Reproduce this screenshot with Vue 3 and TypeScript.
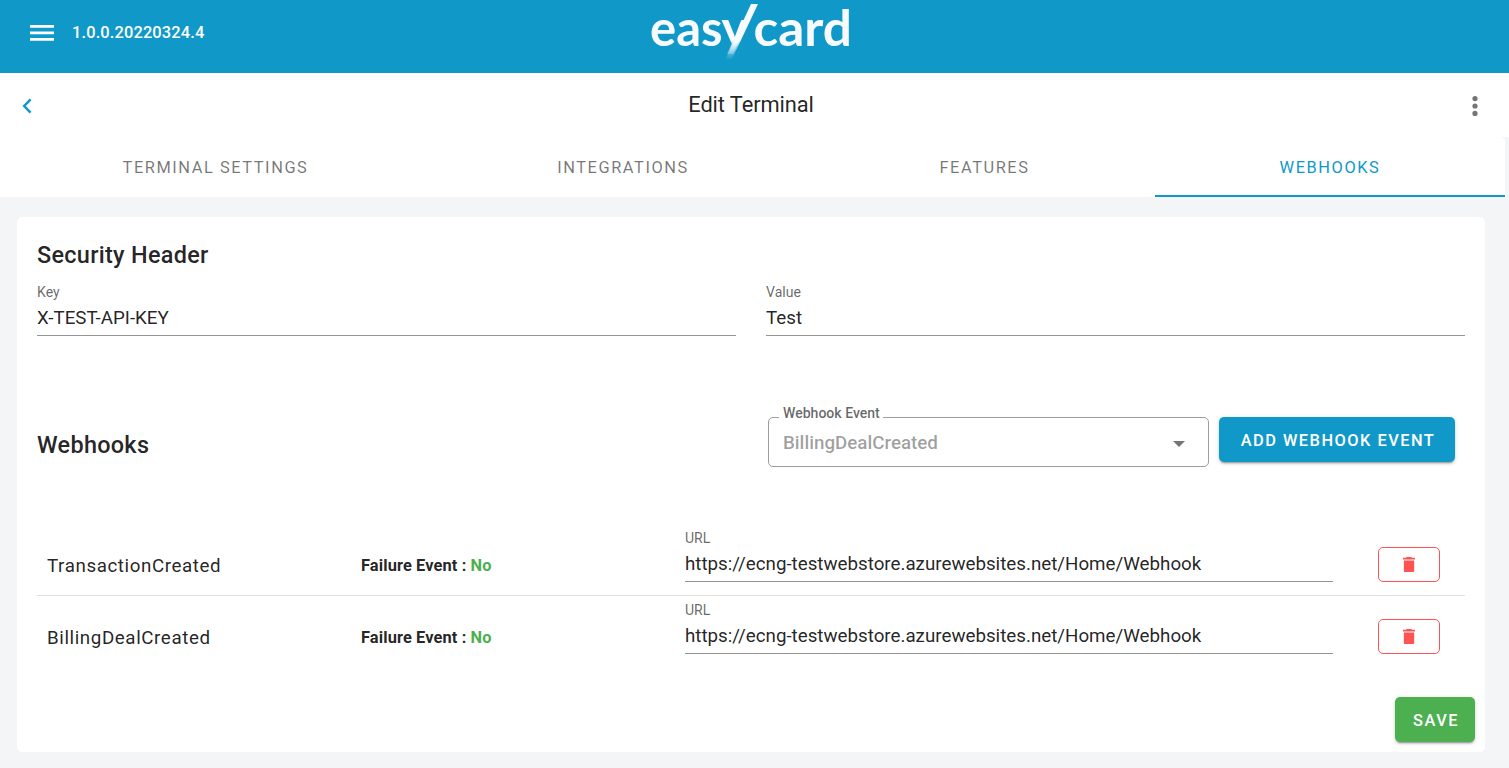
<script setup lang="ts">
import { ref } from 'vue'

interface Webhook {
  name: string
  failure: string
  url: string
}

const version = '1.0.0.20220324.4'
const tabs = ['Terminal settings', 'Integrations', 'Features', 'Webhooks']
const activeTab = ref(3)
const securityHeader = ref([
  { label: 'Key', value: 'X-TEST-API-KEY' },
  { label: 'Value', value: 'Test' },
])
const endpoint = 'https://ecng-testwebstore.azurewebsites.net/Home/Webhook'
const webhooks = ref<Webhook[]>([
  { name: 'TransactionCreated', failure: 'No', url: endpoint },
  { name: 'BillingDealCreated', failure: 'No', url: endpoint },
])
const removeWebhook = (index: number) => webhooks.value.splice(index, 1)
</script>

<template>
  <div class="page">
    <header class="app-bar">
      <div class="bar-side">
        <svg class="menu" viewBox="0 0 24 16" width="24" height="16">
          <path d="M0 0h24v2.7H0zM0 6.5h24v2.7H0zM0 13h24v2.7H0z" fill="#fff" />
        </svg>
        <span class="version">{{ version }}</span>
      </div>
      <svg class="logo" viewBox="0 0 202 62" width="202" height="62">
        <defs>
          <linearGradient id="fade" gradientUnits="userSpaceOnUse" x1="0" y1="40" x2="0" y2="60">
            <stop offset="0" stop-color="#f7fbff" />
            <stop offset="0.35" stop-color="#f7fbff" stop-opacity="0.55" />
            <stop offset="1" stop-color="#f7fbff" stop-opacity="0" />
          </linearGradient>
        </defs>
        <text x="0" y="46" textLength="72.5" lengthAdjust="spacingAndGlyphs">eas</text>
        <text x="71.5" y="46" fill="url(#fade)">y</text>
        <path d="M101 4h7L82 59h-6.5z" fill="url(#fade)" />
        <text class="wide" x="103.5" y="46" textLength="98.5" lengthAdjust="spacingAndGlyphs">card</text>
      </svg>
      <div class="bar-side"></div>
    </header>

    <div class="title-bar">
      <svg class="back" viewBox="0 0 10 16" width="10" height="16">
        <path d="M8.6 1.4 2.2 8l6.4 6.6" fill="none" stroke="#1099c8" stroke-width="2.5" />
      </svg>
      <h1>Edit Terminal</h1>
      <svg class="more" viewBox="0 0 6 20" width="6" height="20">
        <circle cx="3" cy="2.6" r="2.6" /><circle cx="3" cy="10" r="2.6" /><circle cx="3" cy="17.4" r="2.6" />
      </svg>
    </div>

    <nav class="tabs">
      <button
        v-for="(tab, i) in tabs"
        :key="tab"
        class="tab"
        :class="{ active: i === activeTab }"
        @click="activeTab = i"
      >{{ tab }}</button>
    </nav>

    <main class="card">
      <h2>Security Header</h2>
      <div class="header-fields">
        <div v-for="f in securityHeader" :key="f.label" class="field">
          <label>{{ f.label }}</label>
          <div class="value">{{ f.value }}</div>
        </div>
      </div>

      <section class="toolbar">
        <h2>Webhooks</h2>
        <div class="select">
          <span class="legend">Webhook Event</span>
          <span>BillingDealCreated</span>
          <svg viewBox="0 0 12 6" width="12" height="6"><path d="M0 0h12L6 6z" fill="#757575" /></svg>
        </div>
        <button class="btn primary">Add webhook event</button>
      </section>

      <section>
        <div v-for="(hook, i) in webhooks" :key="hook.name" class="row">
          <div class="name">{{ hook.name }}</div>
          <div class="failure">Failure Event : <span>{{ hook.failure }}</span></div>
          <div class="field">
            <label>URL</label>
            <div class="value">{{ hook.url }}</div>
          </div>
          <button class="delete" @click="removeWebhook(i)">
            <svg viewBox="5 3 14 18" width="12" height="15.4">
              <path d="M19 4h-3.5l-1-1h-5l-1 1H5v2h14M6 19a2 2 0 0 0 2 2h8a2 2 0 0 0 2-2V7H6z" fill="#ff5252" />
            </svg>
          </button>
        </div>
      </section>

      <div class="actions"><button class="btn success">Save</button></div>
    </main>
  </div>
</template>

<style>
body {
  margin: 0;
  background: #f4f5f7;
}
</style>

<style scoped>
.page {
  height: 768px;
  overflow: hidden;
  font-family: Roboto, sans-serif;
  font-size: 18.75px;
  color: rgba(0, 0, 0, 0.87);
  background: #f4f5f7;
}
* {
  box-sizing: border-box;
}
h1,
h2 {
  margin: 0;
}
button {
  font-family: inherit;
  border: 0;
  padding: 0;
  background: none;
  text-transform: uppercase;
}
.app-bar {
  display: flex;
  height: 73px;
  padding: 0 30px;
  background: #1099c8;
}
.bar-side {
  flex: 1;
  display: flex;
  align-items: center;
  gap: 18px;
  height: 65px;
  padding-right: 7px;
}
.bar-side + .logo + .bar-side {
  padding: 0 0 0 8px;
}
.version {
  font-size: 16.4px;
  font-weight: 500;
  letter-spacing: 0.15px;
  color: #fff;
}
.logo {
  flex: none;
  margin: 0 2px 0 -5px;
  overflow: visible;
  font-family: Lato, sans-serif;
  font-weight: 700;
  font-size: 49px;
  fill: #f7fbff;
}
.title-bar {
  display: flex;
  align-items: center;
  justify-content: space-between;
  height: 64px;
  padding: 2px 31px 0 22px;
  background: #fff;
}
.title-bar h1 {
  margin: -3px 0 0 -2px;
  font-size: 21.875px;
  font-weight: 400;
  letter-spacing: -0.1px;
}
.back {
  margin-top: -1px;
}
.more {
  fill: #757575;
}
.tabs {
  display: grid;
  grid-template-columns: 431px 384px 339px 351px;
  width: 1505px;
  height: 60px;
  background: #fff;
  border-top-right-radius: 5px;
}
.tab {
  font-size: 16.4px;
  letter-spacing: 1.56px;
  color: rgba(0, 0, 0, 0.54);
  border-top: 2px solid transparent;
  border-bottom: 2px solid transparent;
}
.tab.active {
  margin-left: 1px;
  color: #1099c8;
  border-bottom-color: #1099c8;
}
.card {
  height: 535px;
  margin: 20px 24px 0 17px;
  padding: 20px 20px 0;
  background: #fff;
  border-radius: 5px;
}
h2 {
  font-size: 23.44px;
  font-weight: 500;
  letter-spacing: 0.29px;
  line-height: 36px;
}
.header-fields {
  display: grid;
  grid-template-columns: 1fr 1fr;
  gap: 30px;
  margin-top: 10px;
}
.field {
  height: 53px;
  border-bottom: 1px solid #949494;
}
.field label {
  display: block;
  font-size: 14.06px;
  line-height: 18px;
  color: rgba(0, 0, 0, 0.6);
}
.field .value {
  line-height: 20px;
  margin-top: 7px;
}
.toolbar {
  display: flex;
  align-items: flex-start;
  gap: 10px;
  height: 106px;
  margin-top: 81px;
  padding-right: 10px;
}
.toolbar h2 {
  flex: 1;
  padding-top: 10px;
}
.select {
  position: relative;
  display: flex;
  align-items: center;
  justify-content: space-between;
  width: 441px;
  height: 50px;
  padding: 2px 23px 0 14px;
  border: 1px solid #9e9e9e;
  border-radius: 5px;
  font-weight: 500;
  color: rgba(0, 0, 0, 0.38);
}
.select svg {
  margin-top: 2px;
}
.legend {
  position: absolute;
  top: -14px;
  left: 10px;
  padding: 0 3px 0 4px;
  background: #fff;
  font-size: 14.06px;
  line-height: 18px;
  color: rgba(0, 0, 0, 0.6);
}
.btn {
  height: 45px;
  padding: 2px 0 0 2px;
  border-radius: 5px;
  color: #fff;
  font-size: 16.4px;
  font-weight: 500;
  letter-spacing: 1.47px;
  box-shadow: 0 3px 1px -2px rgba(0, 0, 0, 0.2), 0 2px 2px rgba(0, 0, 0, 0.14), 0 1px 5px rgba(0, 0, 0, 0.12);
}
.primary {
  width: 236px;
  background: #1099c8;
}
.success {
  width: 80px;
  background: #4caf50;
}
.row {
  display: grid;
  grid-template-columns: 314px 324px 648px 62px;
  height: 72px;
  padding: 6px 0 0 10px;
}
.row:not(:last-child) {
  border-bottom: 1px solid #e0e0e0;
  height: 73px;
}
.row + .row {
  padding-top: 5px;
}
.row .delete {
  margin: 18px 0 0 45px;
}
.name {
  line-height: 20px;
  padding-top: 27px;
  letter-spacing: 0.59px;
}
.failure {
  font-size: 16.4px;
  font-weight: 700;
  line-height: 20px;
  padding-top: 27px;
  letter-spacing: 0.12px;
}
.failure span {
  color: #4caf50;
}
.delete {
  display: flex;
  align-items: center;
  justify-content: center;
  width: 62px;
  height: 35px;
  border: 1px solid #ff5252;
  border-radius: 5px;
}
.actions {
  display: flex;
  justify-content: flex-end;
  margin: 29px -10px 0 0;
}
</style>
